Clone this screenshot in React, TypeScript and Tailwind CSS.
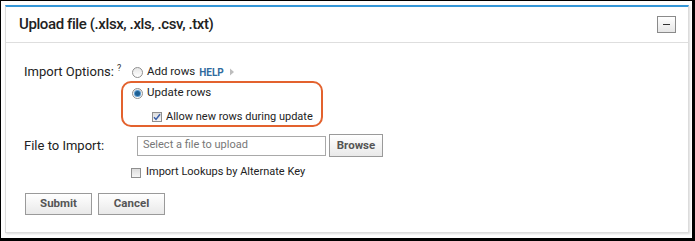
const Radio = ({ checked }: { checked?: boolean }) => (
  <span className="flex h-[11px] w-[11px] shrink-0 items-center justify-center rounded-full border border-[#8f8f8f] bg-gradient-to-b from-[#e6e6e6] to-[#ffffff]">
    {checked && <span className="h-[5px] w-[5px] rounded-full bg-[#1d5f93] ring-1 ring-[#5b9bd0]" />}
  </span>
);

const Check = ({ checked }: { checked?: boolean }) => (
  <span className="flex h-[10px] w-[10px] shrink-0 items-center justify-center border border-[#8f8f8f] bg-gradient-to-b from-[#dcdcdc] to-[#f6f6f6]">
    {checked && (
      <svg width="8" height="8" viewBox="0 0 8 8">
        <path d="M1 4.2 L3 6.4 L7 1.2" fill="none" stroke="#3a5fa8" strokeWidth="1.5" />
      </svg>
    )}
  </span>
);

const Btn = ({ label, className }: { label: string; className: string }) => (
  <button
    className={`flex items-center justify-center border border-[#9a9a9a] bg-gradient-to-b from-[#ffffff] to-[#e9e9e9] text-[11.5px] font-bold text-[#555] ${className}`}
  >
    {label}
  </button>
);

export default function App() {
  return (
    <div className="h-[241px] w-[695px] bg-black pt-px pl-px pr-[3px] pb-[3px] font-['Roboto',sans-serif] text-[13px] text-[#222]">
      <div className="h-full w-full bg-white pt-1 pl-1 pr-[3px]">
        <div className="h-[228px] border border-t-2 border-[#dcdcdc] border-t-[#3497d8] shadow-[1px_1px_2px_rgba(0,0,0,0.15)]">
          <div className="flex h-[36px] items-center justify-between border-b border-[#dedede] pl-[13px] pr-[12px]">
            <span className="whitespace-nowrap text-[15px] font-medium tracking-[-0.4px] text-[#222]">
              Upload file (.xlsx, .xls, .csv, .txt)
            </span>
            <button className="flex h-[17px] w-[19px] items-center justify-center border border-[#8a8a8a] bg-gradient-to-b from-[#ffffff] to-[#e6e6e6]">
              <span className="h-px w-[7px] bg-[#333]" />
            </button>
          </div>
          <div className="pl-[18px] pt-[20px]">
            <div className="flex">
              <div className="w-[97px] shrink-0">
                <div className="flex h-[18px] items-center whitespace-nowrap">
                  Import Options:
                  <sup className="ml-[3px] text-[9px] text-[#333]">?</sup>
                </div>
              </div>
              <div>
                <div className="flex h-[18px] items-center gap-[4px] whitespace-nowrap pl-[11px] text-[11.5px]">
                  <Radio />
                  <span>Add rows</span>
                  <span className="text-[10px] font-bold text-[#2f6b9e]">HELP</span>
                  <svg width="6" height="8" viewBox="0 0 6 8" className="ml-[1px]">
                    <path d="M1 0.5 L5 4 L1 7.5 Z" fill="#bdbdbd" />
                  </svg>
                </div>
                <div className="h-[46px] w-[202px] rounded-[10px] border-2 border-[#e3622e] pl-[9px] pt-[1px] text-[11.5px]">
                  <div className="flex h-[18px] items-center gap-[4px] whitespace-nowrap">
                    <Radio checked />
                    <span>Update rows</span>
                  </div>
                  <div className="flex h-[22px] items-center gap-[4px] whitespace-nowrap pl-[20px] pt-[8px] text-[11px]">
                    <Check checked />
                    <span>Allow new rows during update</span>
                  </div>
                </div>
              </div>
            </div>
            <div className="mt-[7px] flex h-[23px] items-center">
              <div className="w-[113px] shrink-0 whitespace-nowrap">File to Import:</div>
              <div className="flex h-[20px] w-[189px] items-center whitespace-nowrap border border-[#a9a9a9] pl-[5px] text-[11px] text-[#777]">
                Select a file to upload
              </div>
              <Btn label="Browse" className="ml-[3px] h-[23px] w-[54px]" />
            </div>
            <div className="mt-[7px] flex h-[17px] items-center gap-[5px] whitespace-nowrap pl-[107px] text-[11px]">
              <Check />
              <span>Import Lookups by Alternate Key</span>
            </div>
            <div className="mt-[12px] flex gap-[6px] pl-px">
              <Btn label="Submit" className="h-[22px] w-[67px]" />
              <Btn label="Cancel" className="h-[22px] w-[67px]" />
            </div>
          </div>
        </div>
      </div>
    </div>
  );
}
